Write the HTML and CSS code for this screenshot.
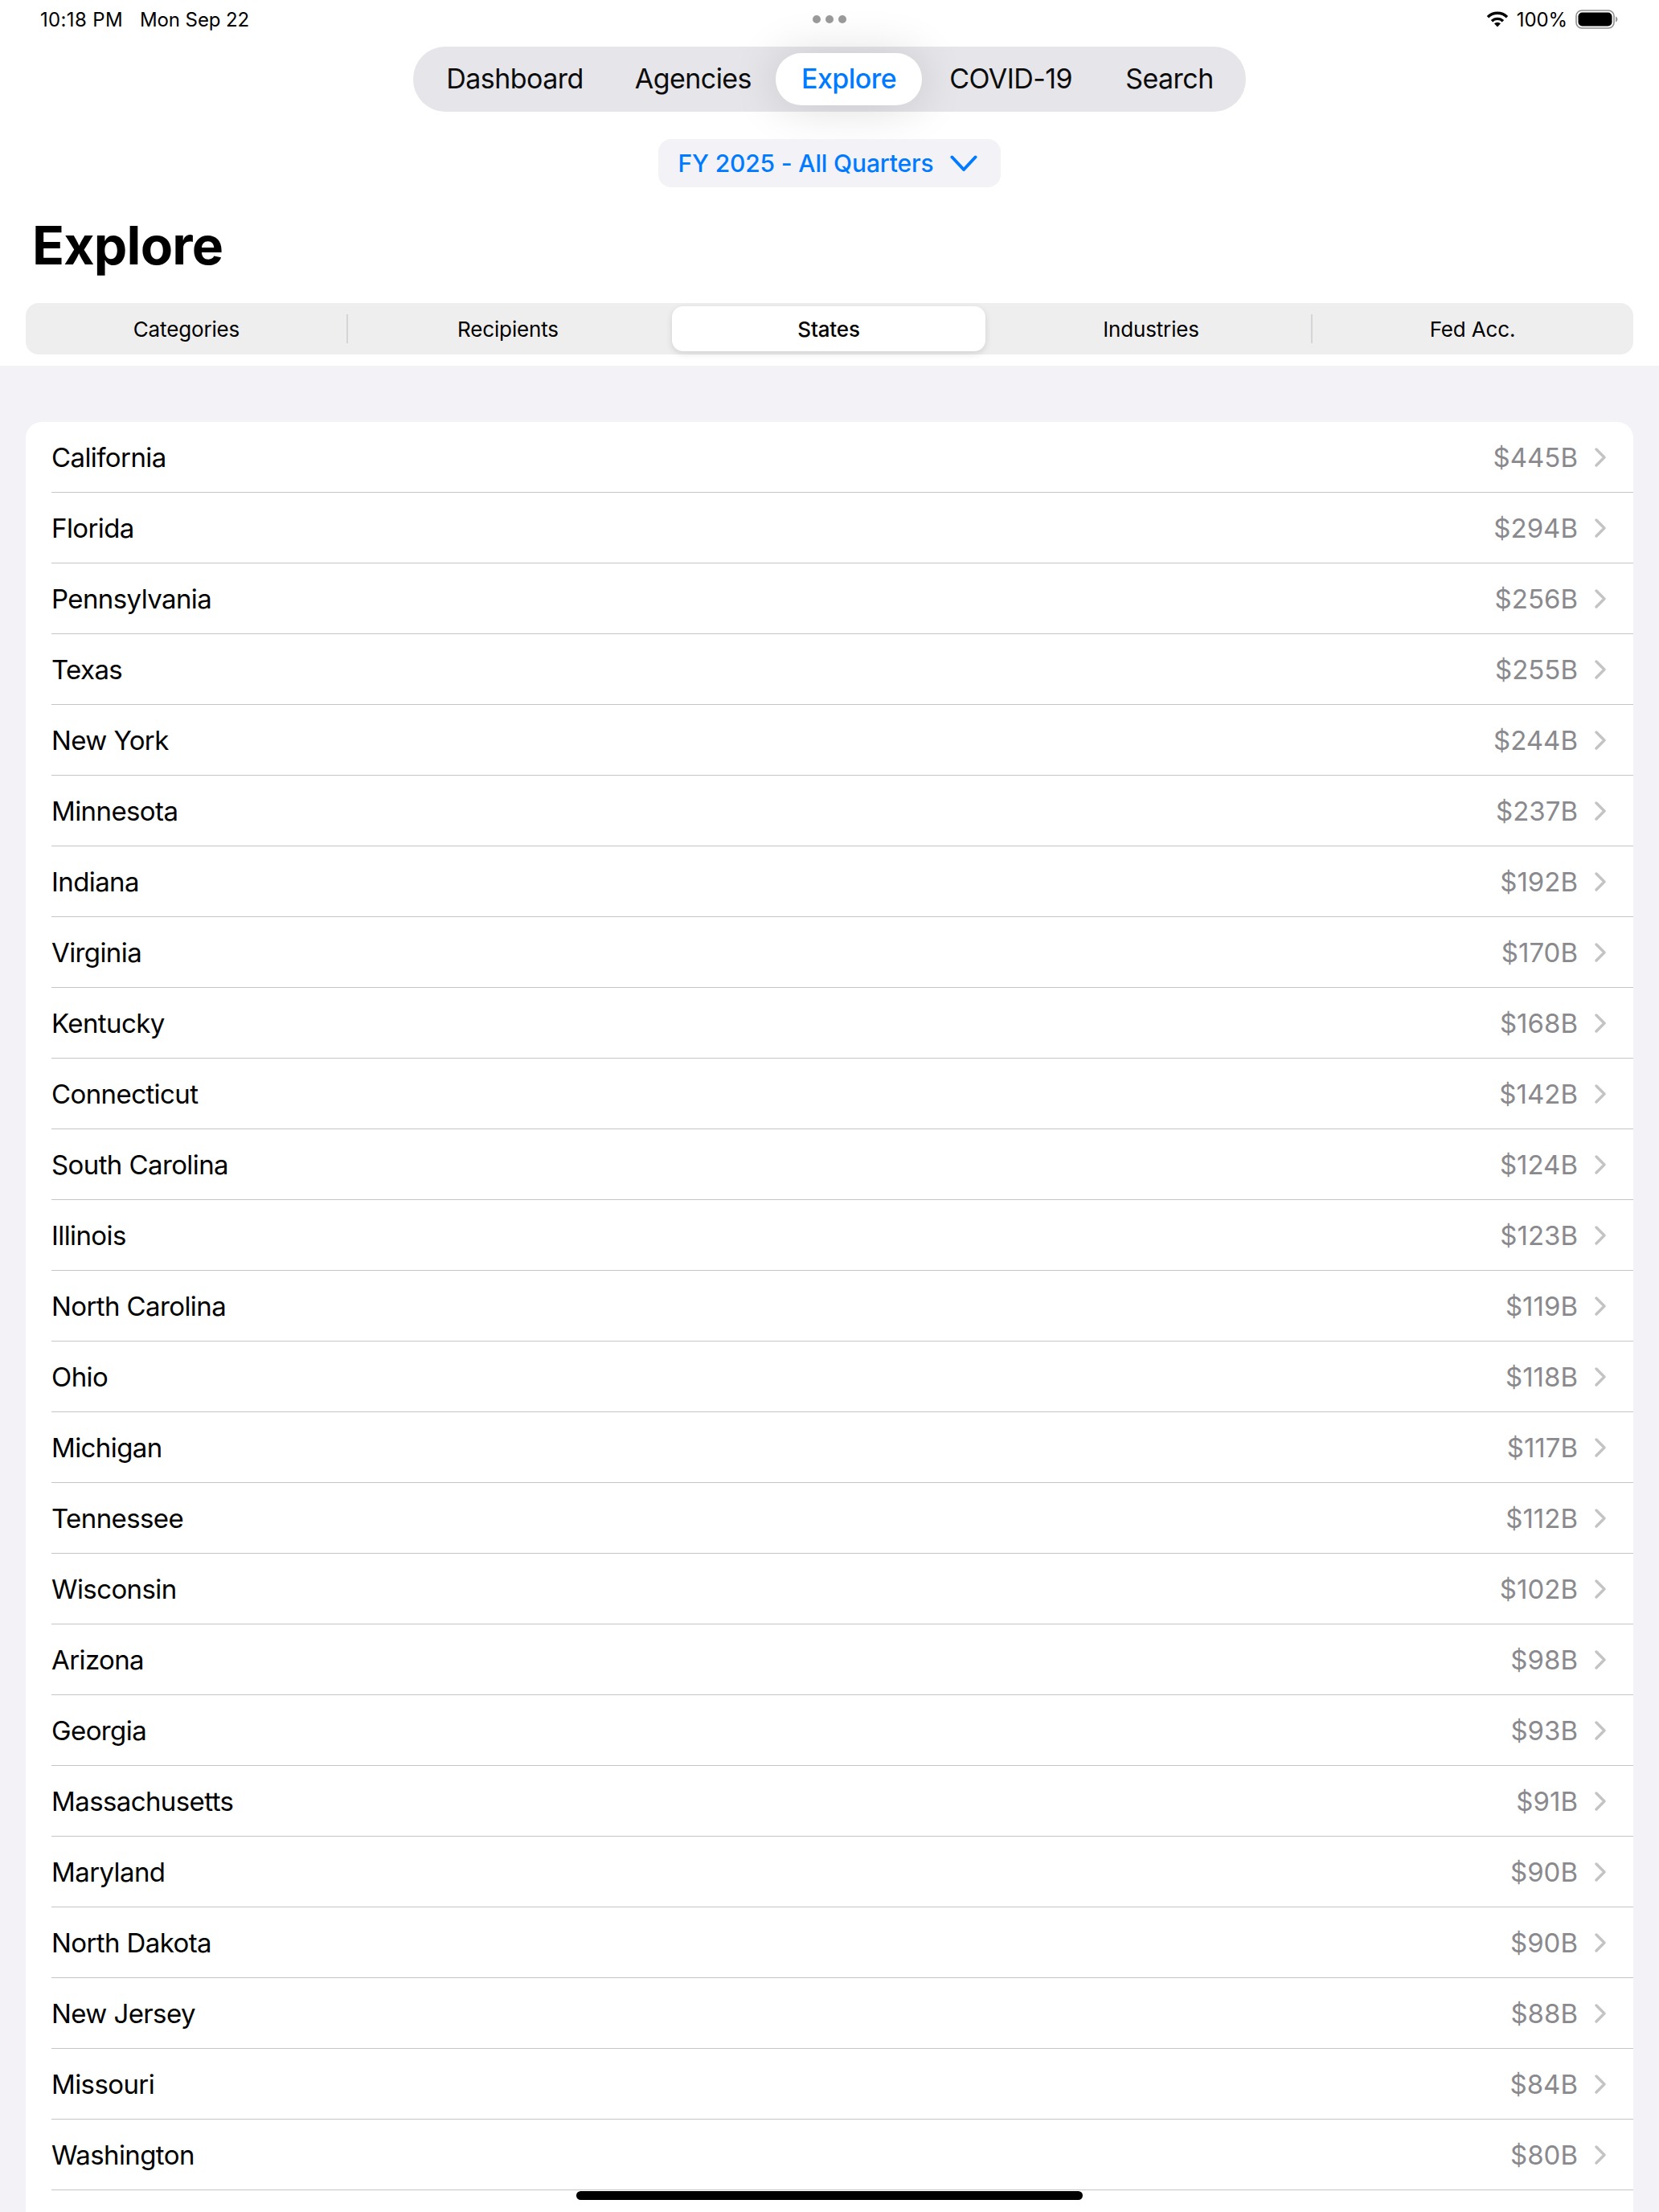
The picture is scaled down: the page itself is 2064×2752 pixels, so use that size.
FILE: index.html
```html
<!DOCTYPE html>
<html>
	<head>
		<title>Explore</title>
		<link rel="stylesheet" href="styles.css">
	</head>
	<body>
		<div id="page">
			<div class="header">
				<div class="status">
					<div class="statusLeft"><span class="clock">10:18 PM</span><span>Mon Sep 22</span></div>
					<div class="dots"><i></i><i></i><i></i></div>
					<div class="statusRight">
						<svg class="wifi" viewBox="0 0 28 20"><path class="wifiArc" d="M2 7.2A17 17 0 0 1 26 7.2"/><path class="wifiArc" d="M7 12.200A10 10 0 0 1 21 12.200"/><path d="M14 19.500 10 15.300A6 6 0 0 1 18 15.300Z"/></svg>
						<span>100%</span>
						<svg class="battery" viewBox="0 0 54 24"><rect x="1" y="1" width="47" height="22" rx="7" fill="none" stroke="#8e8e8e" stroke-width="1.6"/><rect x="3.5" y="3.5" width="42" height="17" rx="5"/><path d="M50 8.5c1.5.5 2.5 2 2.5 3.5s-1 3-2.5 3.5z" fill="#9a9a9a"/></svg>
					</div>
				</div>
				<div class="tabBar">
					<div class="tab">Dashboard</div>
					<div class="tab">Agencies</div>
					<div class="tab active">Explore</div>
					<div class="tab">COVID-19</div>
					<div class="tab last">Search</div>
				</div>
				<div class="yearRow">
					<div class="yearBtn">
						<span>FY 2025 - All Quarters</span>
						<svg class="yearChevron" viewBox="0 0 34 24"><path d="M2.5 4.5 17 20 31.5 4.5"/></svg>
					</div>
				</div>
				<h1 class="title">Explore</h1>
				<div class="segments">
					<div class="seg">Categories</div>
					<div class="segSep"></div>
					<div class="seg">Recipients</div>
					<div class="seg selected">States</div>
					<div class="seg">Industries</div>
					<div class="segSep"></div>
					<div class="seg">Fed Acc.</div>
				</div>
			</div>
			<div class="listArea">
				<div class="card">
					<div class="row"><div class="rowInner"><span class="name">California</span><span class="val">$445B</span><svg class="chev" viewBox="0 0 16 26"><path d="M3 3 13 13 3 23"/></svg></div></div>
					<div class="row"><div class="rowInner"><span class="name">Florida</span><span class="val">$294B</span><svg class="chev" viewBox="0 0 16 26"><path d="M3 3 13 13 3 23"/></svg></div></div>
					<div class="row"><div class="rowInner"><span class="name">Pennsylvania</span><span class="val">$256B</span><svg class="chev" viewBox="0 0 16 26"><path d="M3 3 13 13 3 23"/></svg></div></div>
					<div class="row"><div class="rowInner"><span class="name">Texas</span><span class="val">$255B</span><svg class="chev" viewBox="0 0 16 26"><path d="M3 3 13 13 3 23"/></svg></div></div>
					<div class="row"><div class="rowInner"><span class="name">New York</span><span class="val">$244B</span><svg class="chev" viewBox="0 0 16 26"><path d="M3 3 13 13 3 23"/></svg></div></div>
					<div class="row"><div class="rowInner"><span class="name">Minnesota</span><span class="val">$237B</span><svg class="chev" viewBox="0 0 16 26"><path d="M3 3 13 13 3 23"/></svg></div></div>
					<div class="row"><div class="rowInner"><span class="name">Indiana</span><span class="val">$192B</span><svg class="chev" viewBox="0 0 16 26"><path d="M3 3 13 13 3 23"/></svg></div></div>
					<div class="row"><div class="rowInner"><span class="name">Virginia</span><span class="val">$170B</span><svg class="chev" viewBox="0 0 16 26"><path d="M3 3 13 13 3 23"/></svg></div></div>
					<div class="row"><div class="rowInner"><span class="name">Kentucky</span><span class="val">$168B</span><svg class="chev" viewBox="0 0 16 26"><path d="M3 3 13 13 3 23"/></svg></div></div>
					<div class="row"><div class="rowInner"><span class="name">Connecticut</span><span class="val">$142B</span><svg class="chev" viewBox="0 0 16 26"><path d="M3 3 13 13 3 23"/></svg></div></div>
					<div class="row"><div class="rowInner"><span class="name">South Carolina</span><span class="val">$124B</span><svg class="chev" viewBox="0 0 16 26"><path d="M3 3 13 13 3 23"/></svg></div></div>
					<div class="row"><div class="rowInner"><span class="name">Illinois</span><span class="val">$123B</span><svg class="chev" viewBox="0 0 16 26"><path d="M3 3 13 13 3 23"/></svg></div></div>
					<div class="row"><div class="rowInner"><span class="name">North Carolina</span><span class="val">$119B</span><svg class="chev" viewBox="0 0 16 26"><path d="M3 3 13 13 3 23"/></svg></div></div>
					<div class="row"><div class="rowInner"><span class="name">Ohio</span><span class="val">$118B</span><svg class="chev" viewBox="0 0 16 26"><path d="M3 3 13 13 3 23"/></svg></div></div>
					<div class="row"><div class="rowInner"><span class="name">Michigan</span><span class="val">$117B</span><svg class="chev" viewBox="0 0 16 26"><path d="M3 3 13 13 3 23"/></svg></div></div>
					<div class="row"><div class="rowInner"><span class="name">Tennessee</span><span class="val">$112B</span><svg class="chev" viewBox="0 0 16 26"><path d="M3 3 13 13 3 23"/></svg></div></div>
					<div class="row"><div class="rowInner"><span class="name">Wisconsin</span><span class="val">$102B</span><svg class="chev" viewBox="0 0 16 26"><path d="M3 3 13 13 3 23"/></svg></div></div>
					<div class="row"><div class="rowInner"><span class="name">Arizona</span><span class="val">$98B</span><svg class="chev" viewBox="0 0 16 26"><path d="M3 3 13 13 3 23"/></svg></div></div>
					<div class="row"><div class="rowInner"><span class="name">Georgia</span><span class="val">$93B</span><svg class="chev" viewBox="0 0 16 26"><path d="M3 3 13 13 3 23"/></svg></div></div>
					<div class="row"><div class="rowInner"><span class="name">Massachusetts</span><span class="val">$91B</span><svg class="chev" viewBox="0 0 16 26"><path d="M3 3 13 13 3 23"/></svg></div></div>
					<div class="row"><div class="rowInner"><span class="name">Maryland</span><span class="val">$90B</span><svg class="chev" viewBox="0 0 16 26"><path d="M3 3 13 13 3 23"/></svg></div></div>
					<div class="row"><div class="rowInner"><span class="name">North Dakota</span><span class="val">$90B</span><svg class="chev" viewBox="0 0 16 26"><path d="M3 3 13 13 3 23"/></svg></div></div>
					<div class="row"><div class="rowInner"><span class="name">New Jersey</span><span class="val">$88B</span><svg class="chev" viewBox="0 0 16 26"><path d="M3 3 13 13 3 23"/></svg></div></div>
					<div class="row"><div class="rowInner"><span class="name">Missouri</span><span class="val">$84B</span><svg class="chev" viewBox="0 0 16 26"><path d="M3 3 13 13 3 23"/></svg></div></div>
					<div class="row"><div class="rowInner"><span class="name">Washington</span><span class="val">$80B</span><svg class="chev" viewBox="0 0 16 26"><path d="M3 3 13 13 3 23"/></svg></div></div>
				</div>
			</div>
			<div class="homeBar"></div>
		</div>
	</body>
</html>
```
FILE: styles.css
```css
html, body {
	margin:0;
	height:2752px;
	overflow:hidden;
}

body {
	background-color:#ffffff;
	color:#000000;
	font-family: Inter, "Liberation Sans", sans-serif;
}

#page {
	height:2752px;
	display:flex;
	flex-direction:column;
	position:relative;
	overflow:hidden;
}

.header {
	height:455px;
	box-sizing:border-box;
	flex-shrink:0;
}

.status {
	height:58px;
	box-sizing:border-box;
	padding:0 50px 10px 50px;
	display:grid;
	grid-template-columns:1fr auto 1fr;
	align-items:center;
	font-size:24px;
	letter-spacing:-0.1px;
}

.statusLeft {
	display:flex;
	gap:21px;
}

.clock {
	letter-spacing:0.35px;
}

.dots {
	display:flex;
	gap:6px;
}

.dots i {
	width:10px;
	height:10px;
	border-radius:50%;
	background-color:#9b9b9b;
}

.statusRight {
	display:flex;
	justify-content:flex-end;
	align-items:center;
	gap:10px;
}

.wifi {
	width:28px;
	height:20px;
}

.wifiArc {
	fill:none;
	stroke:#000000;
	stroke-width:3.4;
}

.battery {
	width:54px;
	height:24px;
}

.tabBar {
	width:fit-content;
	height:81px;
	box-sizing:border-box;
	margin:0 auto;
	padding:8px 8px 8px 9px;
	display:flex;
	align-items:center;
	background-color:#e5e5ea;
	border-radius:40px;
}

.tab {
	height:65px;
	box-sizing:border-box;
	padding:0 32px 2px;
	display:flex;
	align-items:center;
	font-size:34px;
	letter-spacing:-0.55px;
	color:#0c0c0c;
	border-radius:32px;
}

.tab.active {
	margin:0 2px 0 -2px;
	background-color:#ffffff;
	color:#007aff;
	font-weight:500;
	box-shadow:0 2px 60px rgba(0,0,0,0.14);
}

.tab.last {
	margin-left:2px;
}

.yearRow {
	margin-top:34px;
	display:flex;
	justify-content:center;
}

.yearBtn {
	height:60px;
	box-sizing:border-box;
	padding:0 29px 0 25px;
	display:flex;
	align-items:center;
	gap:21px;
	background-color:#f2f2f7;
	border-radius:16px;
	color:#007aff;
	font-size:30px;
	font-weight:500;
	letter-spacing:-0.15px;
}

.yearChevron {
	width:34px;
	height:24px;
	fill:none;
	stroke:#007aff;
	stroke-width:4;
	stroke-linecap:round;
	stroke-linejoin:round;
}

.title {
	margin:32px 0 0 40px;
	font-size:66px;
	line-height:80px;
	font-weight:700;
	letter-spacing:-0.8px;
}

.segments {
	margin:32px 32px 0;
	height:64px;
	display:flex;
	align-items:center;
	background-color:#eeeeef;
	border-radius:16px;
}

.seg {
	flex:0 0 400px;
	height:100%;
	display:flex;
	align-items:center;
	justify-content:center;
	font-size:26px;
	letter-spacing:-0.15px;
}

.seg.selected {
	flex:0 0 390px;
	height:56px;
	margin:0 6px 0 4px;
	background-color:#ffffff;
	border-radius:14px;
	box-shadow:0 3px 8px rgba(0,0,0,0.12);
	font-weight:500;
}

.segSep {
	width:2px;
	height:36px;
	margin:0 -1px;
	background-color:#d5d5d7;
}

.listArea {
	flex:1;
	background-color:#f2f2f7;
	padding:70px 32px 0;
	min-height:0;
}

.card {
	height:100%;
	background-color:#ffffff;
	border-radius:20px 20px 0 0;
	padding-left:32px;
}

.row {
	height:88px;
	box-sizing:border-box;
	border-bottom:1px solid #c6c6c8;
}

.rowInner {
	height:87px;
	box-sizing:border-box;
	padding:1px 33px 0 0;
	display:flex;
	align-items:center;
	font-size:33px;
	letter-spacing:-0.6px;
}

.name {
	flex:1;
}

.val {
	color:#8a8a8e;
	letter-spacing:0;
}

.chev {
	width:16px;
	height:26px;
	margin-left:20px;
	fill:none;
	stroke:#c4c4c7;
	stroke-width:3.5;
	stroke-linecap:round;
	stroke-linejoin:round;
}

.homeBar {
	position:absolute;
	left:717px;
	bottom:15px;
	width:630px;
	height:11px;
	background-color:#000000;
	border-radius:6px;
}
```
